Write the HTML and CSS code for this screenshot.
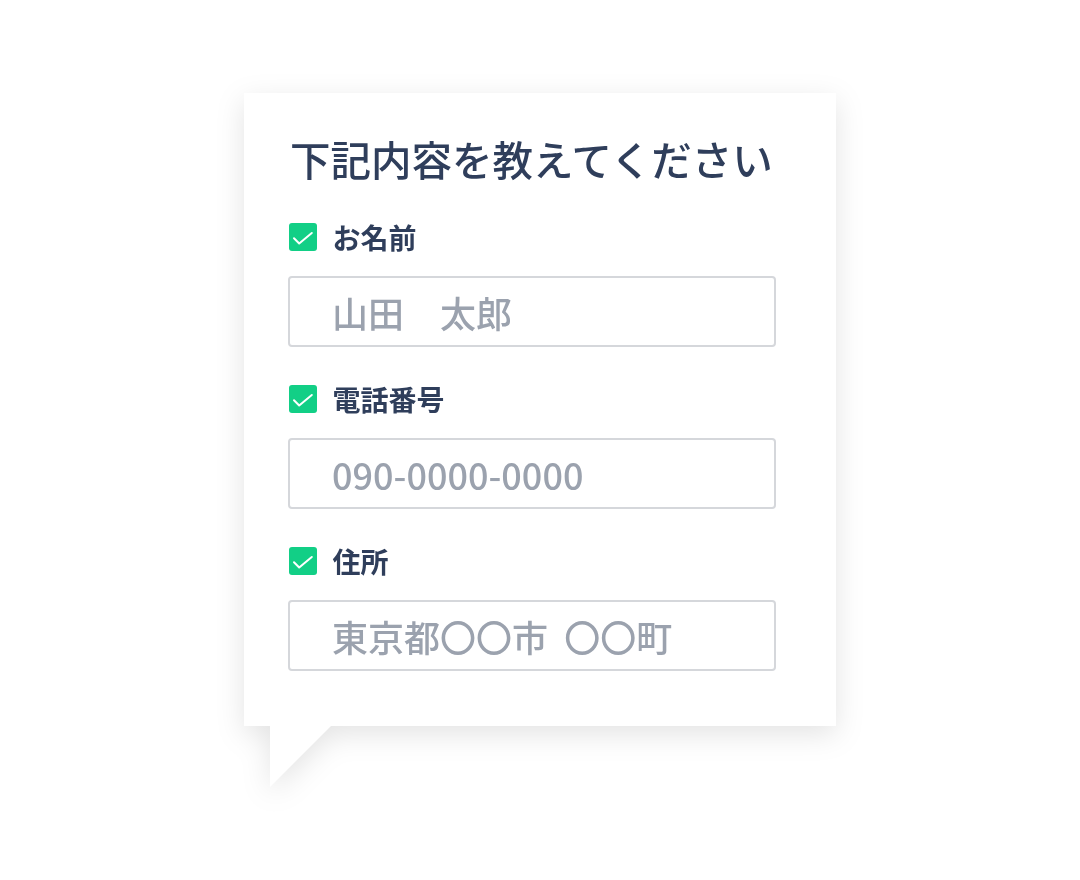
FILE: index.html
```html
<!DOCTYPE html>
<html lang="ja">
<head>
<meta charset="utf-8">
<link rel="stylesheet" href="styles.css">
</head>
<body>
<div class="bubble">
  <div class="card">
    <h1 class="title">下記内容を教えてください</h1>
    <div class="field">
      <div class="label-row">
        <span class="check"><svg viewBox="0 0 28 28" width="28" height="28"><path d="M5 15.3l5.2 5.2L22.8 10" fill="none" stroke="#fff" stroke-width="2" stroke-linecap="round" stroke-linejoin="round"/></svg></span>
        <span class="label">お名前</span>
      </div>
      <div class="input">山田　太郎</div>
    </div>
    <div class="field">
      <div class="label-row">
        <span class="check"><svg viewBox="0 0 28 28" width="28" height="28"><path d="M5 15.3l5.2 5.2L22.8 10" fill="none" stroke="#fff" stroke-width="2" stroke-linecap="round" stroke-linejoin="round"/></svg></span>
        <span class="label">電話番号</span>
      </div>
      <div class="input">090-0000-0000</div>
    </div>
    <div class="field">
      <div class="label-row">
        <span class="check"><svg viewBox="0 0 28 28" width="28" height="28"><path d="M5 15.3l5.2 5.2L22.8 10" fill="none" stroke="#fff" stroke-width="2" stroke-linecap="round" stroke-linejoin="round"/></svg></span>
        <span class="label">住所</span>
      </div>
      <div class="input">東京都〇〇市&nbsp;&nbsp;〇〇町</div>
    </div>
  </div>
  <div class="tail"></div>
</div>
</body>
</html>
```
FILE: styles.css
```css
html, body {
  margin: 0;
  padding: 0;
  background: #ffffff;
}
body {
  font-family: "Noto Sans CJK JP", "Noto Sans", sans-serif;
  width: 1080px;
  height: 880px;
  overflow: hidden;
}
.bubble {
  margin-left: 244px;
  padding-top: 93px;
  width: 592px;
  filter: drop-shadow(0 8px 14px rgba(0, 0, 0, 0.11));
}
.card {
  background: #ffffff;
  width: 592px;
  box-sizing: border-box;
  padding: 0 60px 55px 44px;
  display: flex;
  flex-direction: column;
}
.title {
  margin: 0;
  padding-top: 36px;
  padding-left: 2px;
  font-size: 40.5px;
  line-height: 60px;
  font-weight: 500;
  color: #2f3e5b;
  white-space: nowrap;
}
.field {
  display: flex;
  flex-direction: column;
}
.field + .field {
  margin-top: 38px;
}
.field:first-of-type {
  margin-top: 34px;
}
.label-row {
  display: flex;
  align-items: center;
  gap: 16px;
  height: 28px;
  padding-left: 0.5px;
}
.check {
  width: 28px;
  height: 28px;
  border-radius: 3px;
  background: #12cf86;
  display: flex;
}
.label {
  font-size: 28px;
  font-weight: 700;
  color: #2f3e5b;
  line-height: 28px;
}
.input {
  margin-top: 25px;
  height: 71px;
  width: 488px;
  box-sizing: border-box;
  border: 2px solid #d5d7db;
  border-radius: 4px;
  padding-left: 42px;
  display: flex;
  align-items: center;
  font-size: 36px;
  font-weight: 500;
  color: #9ba2ae;
}
.tail {
  margin-left: 26px;
  width: 61px;
  height: 61px;
  background: #ffffff;
  clip-path: polygon(0 0, 100% 0, 0 100%);
}
```
